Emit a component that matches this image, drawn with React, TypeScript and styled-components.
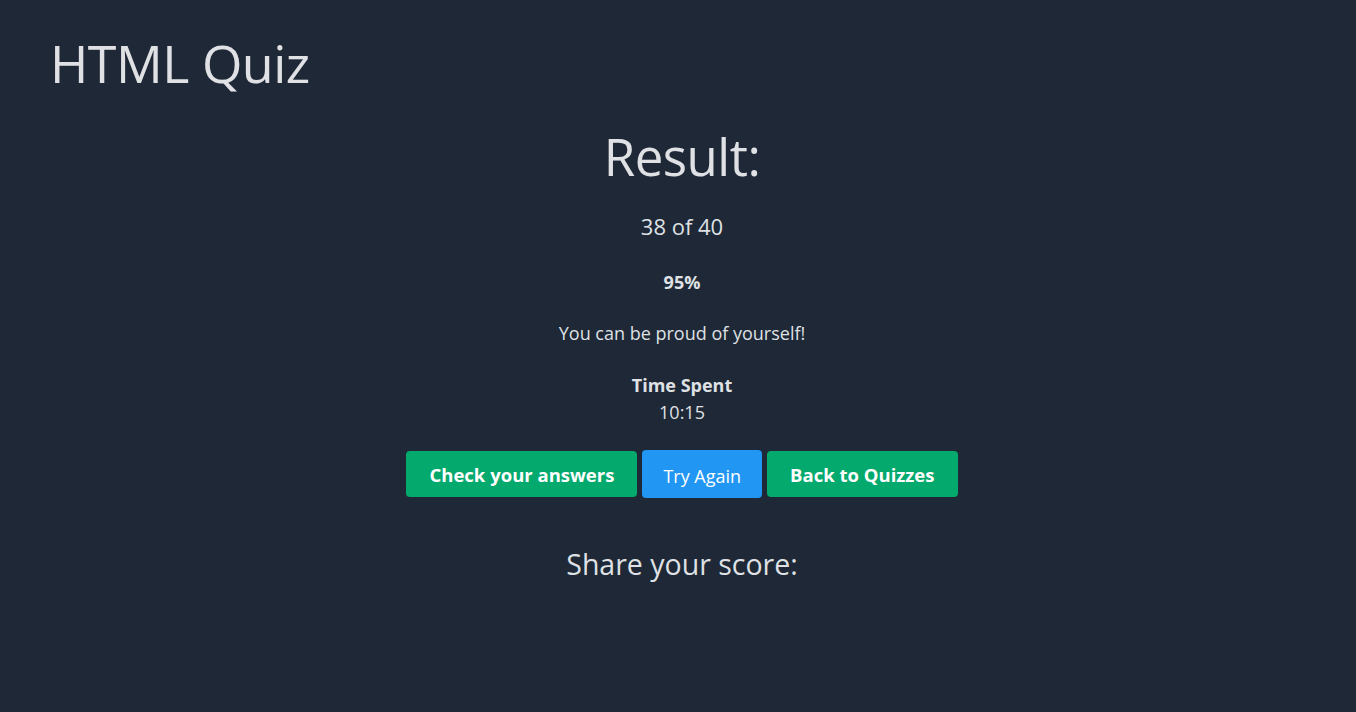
import React from 'react'
import styled, { createGlobalStyle } from 'styled-components'

const GlobalStyle = createGlobalStyle`
  html, body {
    margin: 0;
    padding: 0;
    background-color: #1e2836;
  }
  body {
    font-family: "Open Sans", "Noto Sans", sans-serif;
    color: #dfe1e4;
  }
`

const Page = styled.div`
  min-height: 712px;
  background-color: #1e2836;
  padding: 0 46px 0 54px;
  box-sizing: border-box;
`

const QuizTitle = styled.h1`
  margin: 0 0 0 -4px;
  padding-top: 27px;
  font-size: 52px;
  font-weight: 400;
  line-height: 72px;
  letter-spacing: -0.5px;
`

const Result = styled.section`
  display: flex;
  flex-direction: column;
  align-items: center;
  text-align: center;
`

const Heading = styled.h2`
  margin: 21px 0 0;
  font-size: 51px;
  font-weight: 400;
  line-height: 72px;
  letter-spacing: -0.5px;
`

const Score = styled.p`
  margin: 19px 0 0;
  font-size: 22px;
  line-height: 30px;
`

const Line = styled.p<{ $bold?: boolean }>`
  margin: ${p => (p.$bold ? '28px' : '25px')} 0 0;
  font-size: 18px;
  line-height: 26px;
  font-weight: ${p => (p.$bold ? 700 : 400)};
`

const TimeBlock = styled.div`
  margin-top: 26px;
  display: flex;
  flex-direction: column;
  align-items: center;
  font-size: 18px;
  line-height: 27px;
`

const TimeLabel = styled.span`
  font-weight: 700;
`

const Buttons = styled.div`
  margin-top: 24px;
  display: flex;
  align-items: center;
  gap: 5px;
`

const Button = styled.button<{ $variant: 'green' | 'blue' }>`
  border: none;
  border-radius: 4px;
  font-family: inherit;
  color: #ffffff;
  cursor: pointer;
  background-color: ${p => (p.$variant === 'green' ? '#04a96d' : '#2196f3')};
  height: ${p => (p.$variant === 'green' ? '46px' : '48px')};
  padding: ${p => (p.$variant === 'green' ? '0 23px' : '3px 21px 0')};
  font-size: ${p => (p.$variant === 'green' ? '18.5px' : '18px')};
  font-weight: ${p => (p.$variant === 'green' ? 700 : 400)};
`

const Share = styled.h3`
  margin: 46px 0 0;
  font-size: 28.5px;
  font-weight: 400;
  line-height: 40px;
`

export default function App() {
  return (
    <>
      <GlobalStyle />
      <Page>
        <QuizTitle>HTML Quiz</QuizTitle>
        <Result>
          <Heading>Result:</Heading>
          <Score>38 of 40</Score>
          <Line $bold>95%</Line>
          <Line>You can be proud of yourself!</Line>
          <TimeBlock>
            <TimeLabel>Time Spent</TimeLabel>
            <span>10:15</span>
          </TimeBlock>
          <Buttons>
            <Button $variant="green">Check your answers</Button>
            <Button $variant="blue">Try Again</Button>
            <Button $variant="green">Back to Quizzes</Button>
          </Buttons>
          <Share>Share your score:</Share>
        </Result>
      </Page>
    </>
  )
}
